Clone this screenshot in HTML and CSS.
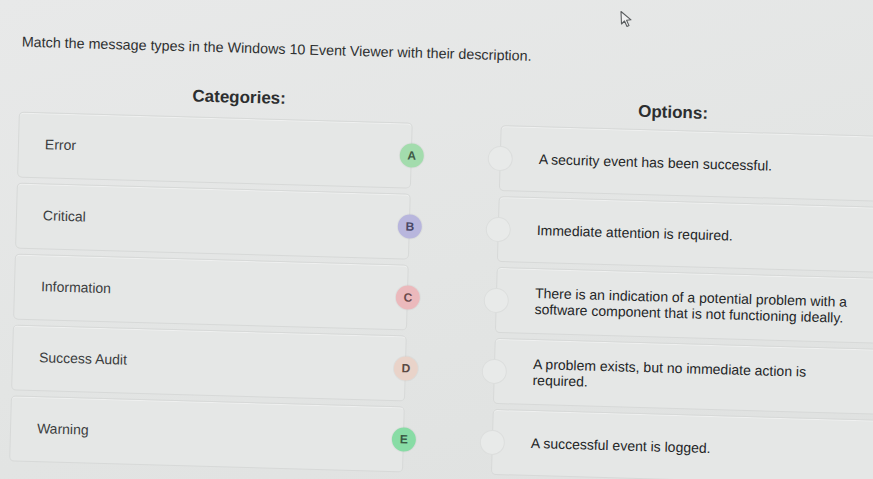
FILE: index.html
```html
<!DOCTYPE html>
<html lang="en">
<head>
    <meta charset="UTF-8">
    <meta name="viewport" content="width=device-width, initial-scale=1.0">
    <title>Event Viewer Matching</title>
    <link rel="stylesheet" href="styles.css">
</head>
<body>
    <div class="page">
        <p class="prompt">Match the message types in the Windows 10 Event Viewer with their description.</p>

        <div class="board">
            <section class="column">
                <h2 class="heading heading-left">Categories:</h2>
                <ul class="stack">
                    <li class="card category">Error<span class="badge badge-a">A</span></li>
                    <li class="card category">Critical<span class="badge badge-b">B</span></li>
                    <li class="card category">Information<span class="badge badge-c">C</span></li>
                    <li class="card category">Success Audit<span class="badge badge-d">D</span></li>
                    <li class="card category">Warning<span class="badge badge-e">E</span></li>
                </ul>
            </section>

            <section class="column">
                <h2 class="heading heading-right">Options:</h2>
                <ul class="stack">
                    <li class="card option"><span class="socket"></span><p>A security event has been successful.</p></li>
                    <li class="card option"><span class="socket"></span><p>Immediate attention is required.</p></li>
                    <li class="card option"><span class="socket"></span><p>There is an indication of a potential problem with a software component that is not functioning ideally.</p></li>
                    <li class="card option"><span class="socket"></span><p>A problem exists, but no immediate action is required.</p></li>
                    <li class="card option"><span class="socket"></span><p>A successful event is logged.</p></li>
                </ul>
            </section>
        </div>
    </div>

    <!-- mouse pointer -->
    <svg class="cursor" width="14" height="18" viewBox="0 0 14 18">
        <path d="M2 1.5 L2.5 14 L5.5 11 L8 16.5 L10 15.6 L7.6 10.2 L12 9.8 Z" fill="#f1f2f2" stroke="#5a5d5f" stroke-width="1.1" stroke-linejoin="round"/>
    </svg>
</body>
</html>
```

FILE: styles.css
```css
html, body {
    margin: 0;
    height: 100%;
    overflow: hidden;
}
body {
    font-family: "Liberation Sans", Arial, sans-serif;
    background: linear-gradient(165deg, #e8e9e9 0%, #e3e5e4 55%, #dfe1e0 100%);
    color: #333;
}
/* the whole screen is photographed at a slight angle */
.page {
    padding: 32px 0 0 22px;
    transform: rotate(1.6deg);
    transform-origin: 0 0;
}
.prompt {
    margin: 0 0 0 1px;
    font-size: 14.3px;
    line-height: 18px;
    color: #2e3031;
}
.board {
    display: grid;
    grid-template-columns: 394px 400px;
    column-gap: 88px;
    margin-top: 31px;
}
.heading {
    height: 20px;
    margin: 0 0 10px;
    font-size: 17px;
    line-height: 20px;
    font-weight: bold;
    color: #2c2e2f;
}
.heading-left {
    padding-left: 173px;
}
.heading-right {
    padding-left: 137px;
    padding-top: 3px;
    box-sizing: border-box;
}
.stack {
    list-style: none;
    margin: 0;
    padding: 0;
    display: flex;
    flex-direction: column;
    gap: 5px;
}
.card {
    position: relative;
    height: 66px;
    box-sizing: border-box;
    display: flex;
    align-items: center;
    border: 1px solid #d7d9d8;
    border-radius: 5px;
    background: #e5e7e6;
    box-shadow: inset 0 1px 0 rgba(255, 255, 255, 0.4);
    font-size: 14px;
}
.category {
    padding: 0 0 3px 26px;
    color: #3b3d3e;
}
.option {
    padding-left: 38px;
    color: #232526;
}
.option p {
    margin: 0;
    max-width: 322px;
    line-height: 16px;
}
.badge {
    position: absolute;
    right: -13px;
    top: 20px;
    width: 24px;
    height: 24px;
    border-radius: 50%;
    display: flex;
    align-items: center;
    justify-content: center;
    font-size: 12px;
    font-weight: bold;
    color: #4a4c4d;
    box-shadow: 0 0 0 1px rgba(0, 0, 0, 0.03);
}
.badge-a { background: #a3dcad; color: #3f5a46; }
.badge-b { background: #b8b6dd; color: #4a4866; }
.badge-c { background: #ebb9bc; color: #6a4a4c; }
.badge-d { background: #e9d3c9; color: #5a4a44; }
.badge-e { background: #88dca5; color: #3a5a44; }
.socket {
    position: absolute;
    left: -13px;
    top: 20px;
    width: 25px;
    height: 25px;
    box-sizing: border-box;
    border-radius: 50%;
    border: 1px solid #dcdedd;
    background: #e8eae9;
}
.cursor {
    position: absolute;
    left: 619px;
    top: 10px;
}
```
